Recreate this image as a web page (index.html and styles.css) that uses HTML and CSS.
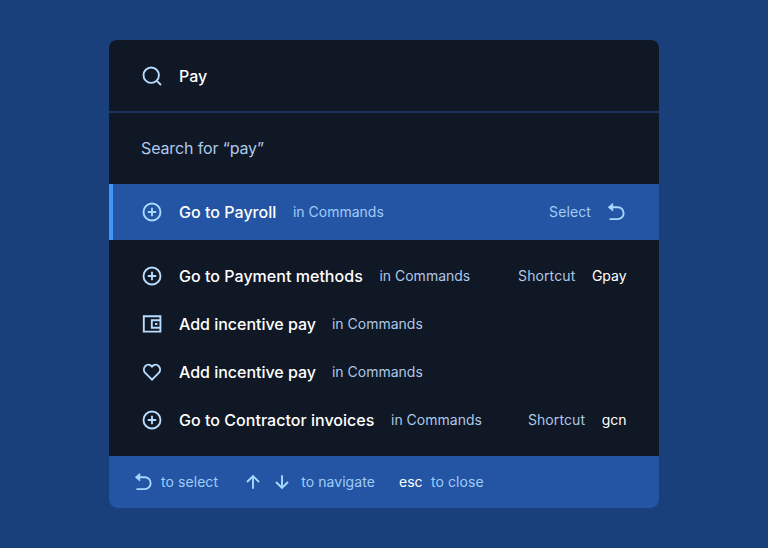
FILE: index.html
```
<!DOCTYPE html>
<html lang="en"><head><meta charset="utf-8"><title>Command palette</title><link rel="stylesheet" href="styles.css"></head>
<body>
<svg class="defs" width="0" height="0">
<symbol id="plus" viewBox="0 0 22 22"><circle cx="11" cy="11" r="8.5"/><path d="M11 6.800v8.400M6.800 11h8.400"/></symbol>
<symbol id="search" viewBox="0 0 22 22"><circle cx="10.200" cy="10.200" r="7.700"/><path d="M15.600 15.600l4.400 4.400"/></symbol>
<symbol id="wallet" viewBox="0 0 22 22"><path d="M2.800 3.200h16.600v15.400H2.800zM19.400 7.200h-8.600v7.600h8.600M14 11h2.400"/></symbol>
<symbol id="heart" viewBox="0 0 22 22"><path d="M11 18.700L4.200 11.800C.2 7.700 6.200.2 11 5.500C15.800.2 21.800 7.700 17.800 11.800Z"/></symbol>
<symbol id="back" viewBox="0 0 22 22"><path d="M5 6.200h7.700a5.900 5.900 0 0 1 0 11.900H5.200" stroke-linecap="round"/><path d="M3.300 6.200l4.500-3.800v7.600z" fill="currentColor" stroke-width=".8" stroke-linejoin="round"/></symbol>
<symbol id="up" viewBox="0 0 22 22"><path d="M11 17.800V5M5 11l6-6 6 6"/></symbol>
<symbol id="down" viewBox="0 0 22 22"><path d="M11 4.200V17M5 11l6 6 6-6"/></symbol>
</svg>
<main class="palette">
<header class="search"><svg class="icon"><use href="#search"/></svg><span class="title">Pay</span></header>
<div class="query">Search for “pay”</div>
<div class="row selected"><svg class="icon"><use href="#plus"/></svg><span class="title">Go to Payroll</span><span class="meta">in Commands</span><span class="action">Select</span><svg class="icon back"><use href="#back"/></svg></div>
<div class="results">
<div class="row"><svg class="icon"><use href="#plus"/></svg><span class="title">Go to Payment methods</span><span class="meta">in Commands</span><span class="action">Shortcut</span><span class="key">Gpay</span></div>
<div class="row"><svg class="icon"><use href="#wallet"/></svg><span class="title compact">Add incentive pay</span><span class="meta">in Commands</span></div>
<div class="row"><svg class="icon"><use href="#heart"/></svg><span class="title compact">Add incentive pay</span><span class="meta">in Commands</span></div>
<div class="row"><svg class="icon"><use href="#plus"/></svg><span class="title">Go to Contractor invoices</span><span class="meta">in Commands</span><span class="action">Shortcut</span><span class="key">gcn</span></div>
</div>
<footer class="footer"><svg class="icon"><use href="#back"/></svg><span class="hint">to select</span><svg class="icon up"><use href="#up"/></svg><svg class="icon down"><use href="#down"/></svg><span class="hint">to navigate</span><span class="esc">esc</span><span class="hint">to close</span></footer>
</main></body></html>
```
FILE: styles.css
```
* { box-sizing: border-box; }
body { margin: 0; height: 548px; padding: 40px 109px; background: #1a407c; font-family: Inter, sans-serif; color: #fff; }
.defs { position: absolute; }
.palette { width: 550px; height: 468px; background: #101725; border-radius: 8px; overflow: hidden; }
.icon { width: 22px; height: 22px; flex: none; color: #b9dcfe; fill: none; stroke: currentColor; stroke-width: 1.9; }
.search { height: 73px; border-bottom: 2px solid #17355f; padding-left: 32px; display: flex; align-items: center; gap: 16px; }
.title { font-size: 16px; font-weight: 500; margin-right: .6px; white-space: nowrap; letter-spacing: .03px; }
.title.compact { letter-spacing: -.02px; margin-right: 0; }
.query { height: 71px; padding-left: 32px; line-height: 71px; font-size: 16px; letter-spacing: -.13px; color: #aecaeb; }
.row { height: 48px; padding: 0 32px; display: flex; align-items: center; gap: 16px; font-size: 14px; white-space: nowrap; }
.selected { height: 56px; background: #2355a4; border-left: 4px solid #4196fb; padding-left: 28px; }
.selected .icon, .footer .icon { color: #a9d8ff; }
.results { height: 216px; padding: 12px 0; }
.meta, .action, .hint, .key, .esc { padding-bottom: 2px; }
.meta, .action { color: #acc8e8; }
.hint, .selected .meta, .selected .action { color: #a0ccfa; }
.action { margin-left: auto; letter-spacing: .1px; }
.key { margin-right: .4px; }
.results .action { margin-right: .6px; }
.selected .action { margin-right: -2px; }
.footer { height: 52px; background: #2355a4; display: flex; align-items: center; padding-left: 23px; font-size: 14px; white-space: nowrap; }
.footer .hint { margin-left: 7px; letter-spacing: .07px; }
.footer .up { margin-left: 24.4px; }
.footer .down { margin-left: 7px; }
.footer .down + .hint { margin-left: 7.7px; }
.footer .esc { margin-left: 24px; }
.footer .esc + .hint { margin-left: 8.5px; }
```
